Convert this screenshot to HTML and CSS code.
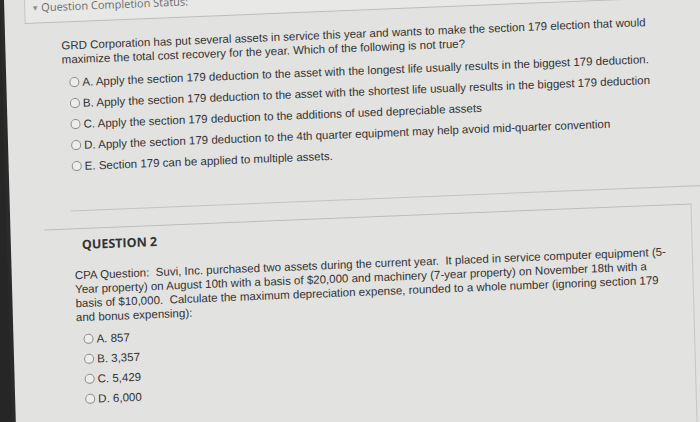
FILE: index.html
```html
<!DOCTYPE html>
<html lang="en">
<head>
<meta charset="utf-8">
<title>Question Completion Status</title>
<link rel="stylesheet" href="styles.css">
</head>
<body>
<div class="screen">
  <div class="bezel"></div>
  <div class="page">
    <div class="status"><span class="caret">&#9662;</span>Question Completion Status:</div>

    <div class="q1">
      <p class="stem">GRD Corporation has put several assets in service this year and wants to make the section 179 election that would<br>maximize the total cost recovery for the year. Which of the following is not true?</p>
      <ul class="opts">
        <li><span class="radio"></span>A. Apply the section 179 deduction to the asset with the longest life usually results in the biggest 179 deduction.</li>
        <li><span class="radio"></span>B. Apply the section 179 deduction to the asset with the shortest life usually results in the biggest 179 deduction</li>
        <li><span class="radio"></span>C. Apply the section 179 deduction to the additions of used depreciable assets</li>
        <li><span class="radio"></span>D. Apply the section 179 deduction to the 4th quarter equipment may help avoid mid-quarter convention</li>
        <li><span class="radio"></span>E. Section 179 can be applied to multiple assets.</li>
      </ul>
      <div class="sep"></div>
    </div>

    <div class="q2">
      <h3 class="qtitle">QUESTION 2</h3>
      <p class="stem2">CPA Question:&nbsp; Suvi, Inc. purchased two assets during the current year.&nbsp; It placed in service computer equipment (5-<br>Year property) on August 10th with a basis of $20,000 and machinery (7-year property) on November 18th with a<br>basis of $10,000.&nbsp; Calculate the maximum depreciation expense, rounded to a whole number (ignoring section 179<br>and bonus expensing):</p>
      <ul class="opts2">
        <li><span class="radio"></span>A. 857</li>
        <li><span class="radio"></span>B. 3,357</li>
        <li><span class="radio"></span>C. 5,429</li>
        <li><span class="radio"></span>D. 6,000</li>
      </ul>
    </div>
  </div>
</div>
</body>
</html>
```

FILE: styles.css
```css
html, body {
  margin: 0;
  padding: 0;
  height: 100%;
  overflow: hidden;
  background: #262626;
}

.screen {
  display: flex;
  width: 760px;
  height: 490px;
  transform-origin: 0 0;
  transform: skew(1.6deg, -2.3deg);
  font-family: "Liberation Sans", Arial, sans-serif;
  color: #333333;
}

.bezel {
  flex: none;
  width: 4px;
  background: #2a2a2a;
}

.page {
  flex: 1;
  background: #e2e2e0;
}

.status {
  box-sizing: border-box;
  height: 25px;
  margin-left: 20px;
  padding: 1px 0 0 8px;
  display: flex;
  align-items: flex-start;
  background: #e8e8e6;
  border-left: 1px solid #c4c4c2;
  border-bottom: 1px solid #bcbcba;
  font-family: "Open Sans", sans-serif;
  font-size: 11px;
  line-height: 15px;
  color: #6b6b6b;
}

.caret {
  font-size: 9px;
  color: #8a8a8a;
  margin-right: 3px;
}

.q1 {
  padding: 16px 0 0 56px;
}

.stem, .stem2 {
  margin: 0;
  font-size: 11.5px;
  line-height: 14px;
}

.opts, .opts2 {
  list-style: none;
  padding: 0;
  font-size: 11.5px;
  line-height: 14px;
}

.opts {
  margin: 5px 0 0 7px;
}

.opts li, .opts2 li {
  display: flex;
  align-items: center;
  height: 21px;
  white-space: nowrap;
}

.opts2 li {
  height: 20px;
}

.radio {
  flex: none;
  width: 8px;
  height: 8px;
  margin-right: 3px;
  border: 1px solid #8c8c8c;
  border-radius: 50%;
  background: #ededeb;
}

.sep {
  height: 0;
  margin: 34px 0 0 5px;
  border-top: 1px solid #c3c3c1;
}

.q2 {
  width: 646px;
  height: 300px;
  margin: 17px 0 0 34px;
  border-top: 1px solid #bcbcba;
  border-right: 1px solid #c6c6c4;
}

.qtitle {
  margin: 8px 0 0 37px;
  font-family: "Open Sans", sans-serif;
  font-weight: 700;
  font-size: 12.5px;
  line-height: 16px;
  color: #333333;
}

.stem2 {
  margin: 15px 0 0 29px;
}

.opts2 {
  margin: 5px 0 0 36px;
}
```
